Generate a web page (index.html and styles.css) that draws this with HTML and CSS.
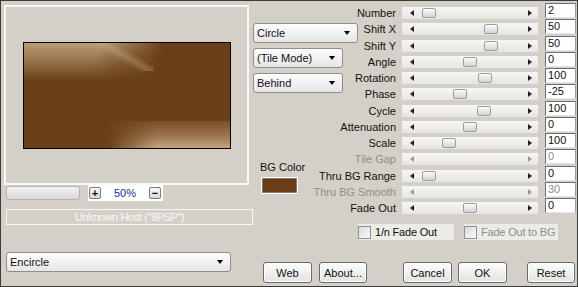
FILE: index.html
```html
<!DOCTYPE html>
<html lang="en">
<head>
  <meta charset="UTF-8" />
  <title>Encircle</title>
  <link rel="stylesheet" href="styles.css">
</head>
<body>
  <div class="window">
    <div class="main">
      <div class="left">
        <div class="preview">
          <div class="render">
            <div class="glow glow-top"></div>
            <div class="glow glow-streak"></div>
            <div class="glow glow-bottom"></div>
          </div>
        </div>
        <div class="zoom-row">
          <div class="zoom-track"></div>
          <div class="zoom-box">
            <span class="mini-btn">+</span>
            <span class="zoom-value">50%</span>
            <span class="mini-btn">−</span>
          </div>
        </div>
        <div class="host">Unknown Host ("9PSP")</div>
      </div>

      <div class="middle">
        <div class="select wide">Circle</div>
        <div class="select">(Tile Mode)</div>
        <div class="select">Behind</div>
        <div class="bg-color">
          <div class="bg-label">BG Color</div>
          <div class="swatch"></div>
        </div>
      </div>

      <div class="controls">
        <div class="sliders" id="sliders"></div>
        <div class="checks">
          <label class="check"><span class="box"></span>1/n Fade Out</label>
          <label class="check disabled"><span class="box"></span>Fade Out to BG</label>
        </div>
      </div>
    </div>

    <div class="bottom">
      <div class="select filter">Encircle</div>
      <button class="btn btn-web">Web</button>
      <button class="btn btn-about">About...</button>
      <button class="btn btn-cancel">Cancel</button>
      <button class="btn btn-ok">OK</button>
      <button class="btn btn-reset">Reset</button>
    </div>
  </div>

  <script>
    const sliders = document.getElementById('sliders');

    // label, value, thumb offset in track (px), disabled
    const params = [
      ['Number',         '2',   20],
      ['Shift X',        '50',  82],
      ['Shift Y',        '50',  82],
      ['Angle',          '0',   61],
      ['Rotation',       '100', 76],
      ['Phase',          '-25', 51],
      ['Cycle',          '100', 75],
      ['Attenuation',    '0',   61],
      ['Scale',          '100', 40],
      ['Tile Gap',       '0',   null, true],
      ['Thru BG Range',  '0',   20],
      ['Thru BG Smooth', '30',  null, true],
      ['Fade Out',       '0',   61]
    ];

    params.forEach(([name, value, pos, off]) => {
      const lbl = document.createElement('div');
      lbl.className = 'label' + (off ? ' disabled' : '');
      lbl.innerHTML = '<span>' + name + '</span>';

      const track = document.createElement('div');
      track.className = 'track' + (off ? ' disabled' : '');
      if (pos !== null) {
        const thumb = document.createElement('span');
        thumb.className = 'thumb';
        thumb.style.left = pos + 'px';
        track.appendChild(thumb);
      }

      const val = document.createElement('div');
      val.className = 'value' + (off ? ' disabled' : '');
      val.textContent = value;

      sliders.append(lbl, track, val);
    });
  </script>
</body>
</html>
```

FILE: styles.css
```css
:root {
  --win: #d4d0c8;
  --light: #ecebe7;
  --brown: #6a4018;
  --text: #111;
  --muted: #8d8d8d;
}
* { box-sizing: border-box; margin: 0; padding: 0; }
body {
  font-family: "Liberation Sans", Arial, sans-serif;
  font-size: 11px;
  color: var(--text);
  background: var(--win);
}
.window {
  width: 578px;
  height: 287px;
  border: 1px solid #3c3c3c;
  background: var(--win);
  display: flex;
  flex-direction: column;
}
.main {
  display: flex;
  height: 246px;
}

/* left column */
.left {
  width: 252px;
  padding: 4px 0 0 3px;
}
.preview {
  width: 245px;
  height: 180px;
  border: 2px solid #f8f8f8;
  display: flex;
  align-items: center;
  justify-content: center;
}
.render {
  width: 208px;
  height: 107px;
  border: 1px solid #000;
  background: var(--brown);
  position: relative;
  overflow: hidden;
}
.glow { position: absolute; }
.glow-top {
  left: 0;
  top: 0;
  width: 140px;
  height: 38px;
  background: linear-gradient(to bottom, rgba(196,166,128,.9) 0%, rgba(180,148,108,.8) 30%, rgba(106,64,24,0) 100%);
  -webkit-mask-image: linear-gradient(110deg, #000 50%, transparent 92%);
  mask-image: linear-gradient(110deg, #000 50%, transparent 92%);
}
.glow-streak {
  left: 70px;
  top: 0;
  width: 60px;
  height: 28px;
  background: linear-gradient(30deg, rgba(106,64,24,0) 40%, rgba(205,180,145,.35) 52%, rgba(106,64,24,0) 64%);
}
.glow-bottom {
  right: 0;
  bottom: 0;
  width: 122px;
  height: 27px;
  background: linear-gradient(to top, rgba(200,170,130,.95) 0%, rgba(170,135,95,.7) 50%, rgba(140,100,60,.45) 100%);
  -webkit-mask-image: linear-gradient(to right, transparent 0, #000 40%);
  mask-image: linear-gradient(to right, transparent 0, #000 40%);
}
.zoom-row {
  display: flex;
  align-items: center;
  height: 16px;
}
.zoom-track {
  width: 74px;
  height: 14px;
  margin-left: 2px;
  border: 1px solid #b4b4b4;
  border-radius: 3px;
  background: linear-gradient(to bottom, #f2f2f2, #d8d8d8);
}
.zoom-box {
  width: 75px;
  height: 16px;
  margin-left: 8px;
  background: #fff;
  display: flex;
  align-items: center;
  justify-content: space-between;
  padding: 0 2px 0 1px;
}
.mini-btn {
  width: 12px;
  height: 12px;
  border: 1px solid #7a7a7a;
  border-radius: 2px;
  background: linear-gradient(to bottom, #fafafa, #d8d8d8);
  font-size: 11px;
  font-weight: bold;
  line-height: 10px;
  text-align: center;
}
.zoom-value {
  color: #1c1c9c;
}
.host {
  margin: 8px 0 0 2px;
  width: 247px;
  height: 16px;
  border: 1px solid #f6f6f6;
  color: #f8f8f8;
  text-align: center;
  line-height: 14px;
  letter-spacing: -0.4px;
}

/* middle column */
.middle {
  width: 105px;
  padding-top: 22px;
}
.select {
  width: 90px;
  height: 20px;
  margin-bottom: 5px;
  border: 1px solid #8e8e8e;
  border-radius: 3px;
  background: linear-gradient(to bottom, #fdfdfd, #e6e6e6);
  display: flex;
  align-items: center;
  justify-content: space-between;
  padding: 0 7px 0 3px;
}
.select::after {
  content: "";
  border-left: 3.5px solid transparent;
  border-right: 3.5px solid transparent;
  border-top: 4px solid #000;
}
.select.wide { width: 105px; }
.bg-color {
  margin: 67px 0 0 7px;
  width: 42px;
}
.bg-label {
  line-height: 14px;
  white-space: nowrap;
}
.swatch {
  width: 35px;
  height: 15px;
  margin: 4px 0 0 2px;
  border: 1px solid #7c7c7c;
  box-shadow: 0 0 0 1px #fff;
  background: #6b3d14;
}

/* sliders */
.controls {
  flex: 1;
  padding-top: 4px;
}
.sliders {
  display: grid;
  grid-template-columns: 38px 136px 32px;
  grid-auto-rows: 16.25px;
  column-gap: 6px;
}
.label {
  display: flex;
  justify-content: flex-end;
  align-items: center;
  white-space: nowrap;
}
.label.disabled { color: var(--muted); }
.track {
  position: relative;
  align-self: center;
  height: 12px;
  background: linear-gradient(to bottom, #f6f6f5, #e6e5e2);
  display: flex;
  align-items: center;
  justify-content: space-between;
  padding: 0 6px 0 8px;
}
.track::before,
.track::after {
  content: "";
  border-top: 3.5px solid transparent;
  border-bottom: 3.5px solid transparent;
}
.track::before { border-right: 4px solid #222; }
.track::after { border-left: 4px solid #222; }
.track.disabled::before { border-right-color: #9a9a9a; }
.track.disabled::after { border-left-color: #9a9a9a; }
.thumb {
  position: absolute;
  top: 1px;
  width: 14px;
  height: 10px;
  border: 1px solid #9c9c9c;
  border-radius: 2px;
  background: linear-gradient(to bottom, #fbfbfb, #d3d3d3);
}
.value {
  justify-self: end;
  align-self: start;
  margin-top: -2px;
  width: 31px;
  height: 15px;
  background: #fff;
  border-top: 1px solid #6f6f6f;
  border-left: 1px solid #6f6f6f;
  border-right: 1px solid #9a9a9a;
  border-bottom: 1px solid #e6e6e6;
  padding-left: 2px;
  line-height: 13px;
}
.value.disabled { color: var(--muted); }
.checks {
  display: flex;
  gap: 10px;
  margin-top: 8px;
}
.check {
  display: flex;
  align-items: center;
  gap: 4px;
  height: 16px;
  width: 96px;
  background: var(--light);
  white-space: nowrap;
  letter-spacing: -0.2px;
}
.check + .check { width: 94px; }
.check.disabled { color: var(--muted); }
.box {
  flex: none;
  width: 13px;
  height: 13px;
  border: 1px solid #8f8f8f;
  background: linear-gradient(135deg, #d9d9d9, #fbfbfb);
}

/* bottom row */
.bottom {
  flex: 1;
  display: flex;
  align-items: flex-start;
  padding: 5px 0 0 5px;
}
.select.filter {
  width: 225px;
  margin: 0;
}
.btn {
  font: inherit;
  color: var(--text);
  width: 49px;
  height: 21px;
  margin-top: 10px;
  border: 1px solid #6a6a6a;
  border-radius: 3px;
  background: linear-gradient(to bottom, #fdfdfd, #e2e2e0);
  box-shadow: inset 0 0 0 1px #fff;
}
.btn-web { margin-left: 32px; }
.btn-about { margin-left: 7px; width: 48px; }
.btn-cancel { margin-left: 36px; }
.btn-ok { margin-left: 6px; }
.btn-reset { margin-left: 20px; width: 48px; }
```
